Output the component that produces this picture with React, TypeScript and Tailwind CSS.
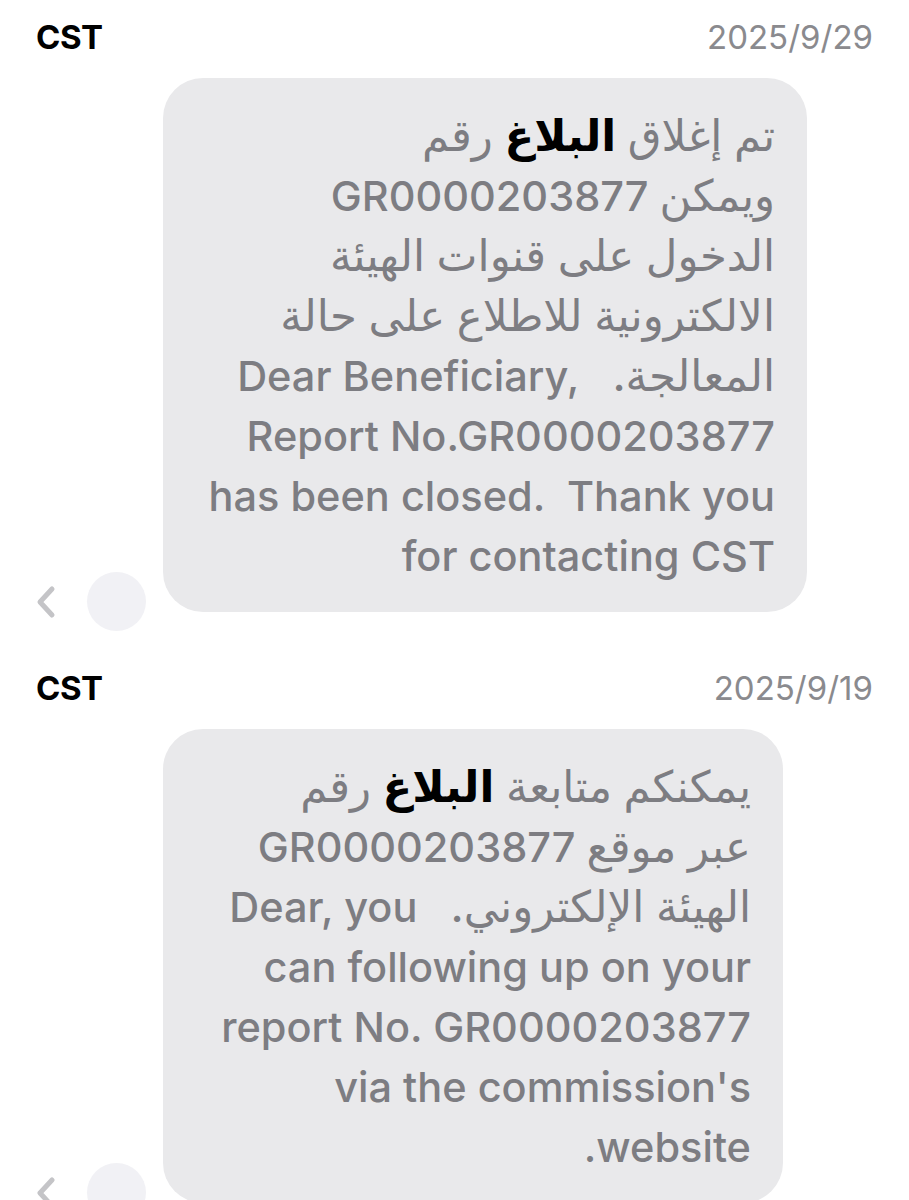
import { ReactNode } from "react";

type Line = { text: ReactNode };

const FONT = "font-['Inter','DejaVu_Sans',sans-serif]";

const Chevron = () => (
  <svg width="22" height="34" viewBox="0 0 22 34" fill="none">
    <path
      d="M17 4 L5 17 L17 30"
      stroke="#c4c4c7"
      strokeWidth="5"
      strokeLinecap="round"
      strokeLinejoin="round"
    />
  </svg>
);

// Arabic runs render a touch larger than the Latin ones
const Ar = ({ children }: { children: ReactNode }) => (
  <span className="text-[43.5px] leading-[0]">{children}</span>
);

const Highlight = ({ children }: { children: ReactNode }) => (
  <span className="font-bold text-black">{children}</span>
);

const Ltr = ({ children }: { children: ReactNode }) => <span dir="ltr">{children}</span>;

interface MessageProps {
  sender: string;
  date: string;
  lines: Line[];
  bubbleWidth: string;
}

const Message = ({ sender, date, lines, bubbleWidth }: MessageProps) => (
  <div className="flex flex-col">
    <div className="flex h-[78px] items-center justify-between px-[36px] pb-[2px]">
      <span className="text-[33px] font-bold tracking-[-0.5px] text-black">{sender}</span>
      <span className="text-[33px] text-[#8a8a8e]">{date}</span>
    </div>
    <div className="flex items-end">
      <div className="flex w-[163px] shrink-0 items-center -mb-[19px] pl-[35px]">
        <Chevron />
        <div className="ml-[30px] h-[59px] w-[59px] rounded-full bg-[#f1f1f5]" />
      </div>
      <div
        dir="rtl"
        className={`${bubbleWidth} rounded-[40px] bg-[#e9e9eb] pt-[28px] pb-[26px] pr-[32px] text-right text-[41.5px] font-medium leading-[60px] text-[#7d7d82]`}
      >
        {lines.map((l, i) => (
          <div key={i} className="h-[60px] whitespace-pre">
            {l.text}
          </div>
        ))}
      </div>
    </div>
  </div>
);

export default function App() {
  return (
    <div className={`min-h-[1200px] w-full overflow-hidden bg-white ${FONT}`}>
      <Message
        sender="CST"
        date="2025/9/29"
        bubbleWidth="w-[644px]"
        lines={[
          { text: <Ar>تم إغلاق <Highlight>البلاغ</Highlight> رقم</Ar> },
          { text: <><Ar>ويمكن</Ar> <Ltr>GR0000203877</Ltr></> },
          { text: <Ar>الدخول على قنوات الهيئة</Ar> },
          { text: <Ar>الالكترونية للاطلاع على حالة</Ar> },
          { text: <><Ar>المعالجة.</Ar>   <Ltr>Dear Beneficiary,</Ltr></> },
          { text: <Ltr>Report No.GR0000203877</Ltr> },
          { text: <Ltr>has been closed.  Thank you</Ltr> },
          { text: <Ltr>for contacting CST</Ltr> },
        ]}
      />
      <div className="h-[39px]" />
      <Message
        sender="CST"
        date="2025/9/19"
        bubbleWidth="w-[620px]"
        lines={[
          { text: <Ar>يمكنكم متابعة <Highlight>البلاغ</Highlight> رقم</Ar> },
          { text: <><Ar>عبر موقع</Ar> <Ltr>GR0000203877</Ltr></> },
          { text: <><Ar>الهيئة الإلكتروني.</Ar>   <Ltr>Dear, you</Ltr></> },
          { text: <Ltr>can following up on your</Ltr> },
          { text: <Ltr>report No. GR0000203877</Ltr> },
          { text: <Ltr>via the commission's</Ltr> },
          { text: "website." },
        ]}
      />
    </div>
  );
}
